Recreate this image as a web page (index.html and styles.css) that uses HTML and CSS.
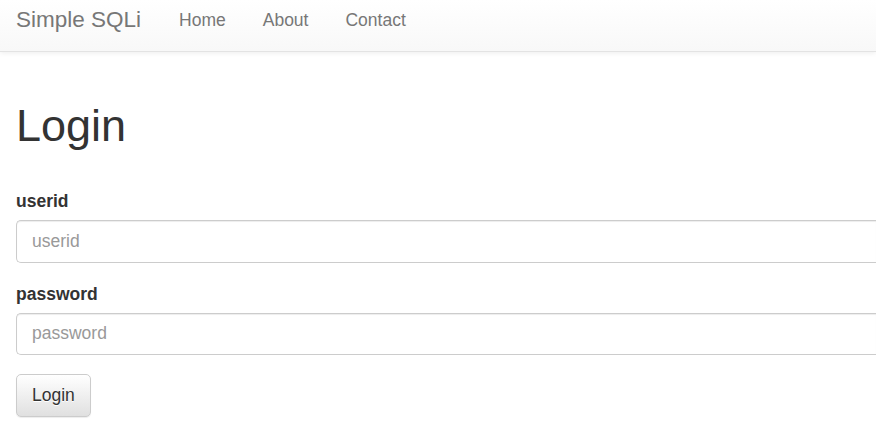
FILE: index.html
```html
<!DOCTYPE html>
<html lang="en">
<head>
<meta charset="utf-8">
<title>Simple SQLi</title>
<link rel="stylesheet" href="styles.css">
</head>
<body>
<nav class="navbar">
  <a class="brand" href="#">Simple SQLi</a>
  <ul class="nav">
    <li><a href="#">Home</a></li>
    <li><a href="#">About</a></li>
    <li><a href="#">Contact</a></li>
  </ul>
</nav>
<main class="container">
  <h1 class="title">Login</h1>
  <form class="login-form">
    <div class="form-group">
      <label class="form-label" for="userid">userid</label>
      <input class="form-control" id="userid" type="text" placeholder="userid">
    </div>
    <div class="form-group">
      <label class="form-label" for="password">password</label>
      <input class="form-control" id="password" type="password" placeholder="password">
    </div>
    <button class="btn" type="submit">Login</button>
  </form>
</main>
</body>
</html>
```
FILE: styles.css
```css
html, body {
  margin: 0;
  padding: 0;
  overflow: hidden;
}
body {
  font-family: "Liberation Sans", Arial, sans-serif;
  color: #333;
  background: #fff;
  width: 876px;
  height: 442px;
}
.navbar {
  display: flex;
  align-items: flex-start;
  height: 51px;
  border-bottom: 1px solid #e3e3e3;
  background: linear-gradient(to bottom, #ffffff 0%, #f8f8f8 100%);
  box-shadow: 0 1px 5px rgba(0, 0, 0, 0.075);
}
.brand {
  display: block;
  padding: 7px 19.5px 0 16px;
  font-size: 22.5px;
  line-height: 25px;
  color: #777;
  text-decoration: none;
}
.nav {
  display: flex;
  list-style: none;
  margin: 0;
  padding: 0;
}
.nav a {
  display: block;
  padding: 7.5px 18.5px 0;
  font-size: 17.5px;
  line-height: 25px;
  color: #777;
  text-decoration: none;
}
.container {
  padding: 0 0 0 16px;
}
.title {
  margin: 48.5px 0 38.5px;
  font-size: 45px;
  line-height: 50px;
  font-weight: 500;
  color: #333;
}
.login-form {
  width: 100%;
}
.form-group {
  margin-bottom: 19px;
}
.form-label {
  display: block;
  margin-bottom: 6px;
  font-size: 17.5px;
  line-height: 25px;
  font-weight: bold;
  color: #333;
}
.form-control {
  display: block;
  box-sizing: border-box;
  width: 100%;
  height: 42.5px;
  padding: 0 15px;
  font-family: inherit;
  font-size: 17.5px;
  color: #555;
  background: #fff;
  border: 1px solid #ccc;
  border-right: 0;
  border-radius: 5px 0 0 5px;
  box-shadow: inset 0 1px 1px rgba(0, 0, 0, 0.075);
  outline: none;
}
.form-control::placeholder {
  color: #999;
}
.btn {
  display: block;
  box-sizing: border-box;
  height: 42.5px;
  padding: 0 15px;
  font-family: inherit;
  font-size: 17.5px;
  line-height: 25px;
  color: #333;
  background: linear-gradient(to bottom, #ffffff 0%, #e0e0e0 100%);
  border: 1px solid #ccc;
  border-radius: 5px;
  text-shadow: 0 1px 0 #fff;
  box-shadow: inset 0 1px 0 rgba(255, 255, 255, 0.15), 0 1px 1px rgba(0, 0, 0, 0.075);
}
```
